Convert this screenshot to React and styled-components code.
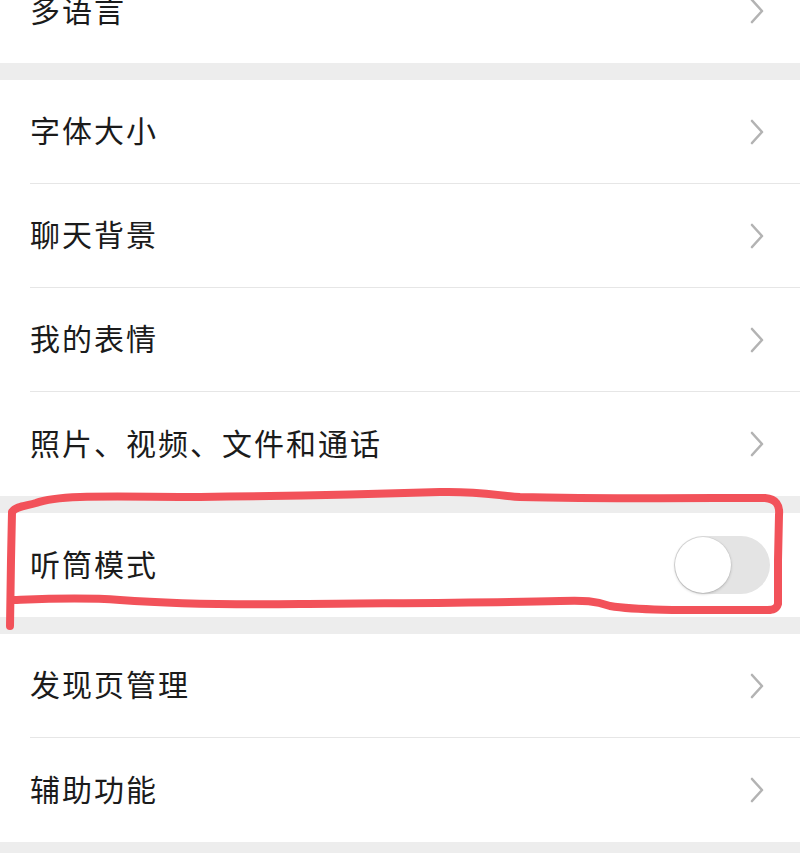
import styled, { createGlobalStyle } from "styled-components";

const GlobalStyle = createGlobalStyle`
  html, body {
    margin: 0;
    padding: 0;
    background: #ededed;
  }
  body {
    font-family: "Noto Sans CJK SC", "Noto Sans", sans-serif;
    overflow: hidden;
  }
`;

const Page = styled.div`
  position: relative;
  width: 800px;
  height: 853px;
  overflow: hidden;
  background: #ededed;
`;

const List = styled.div`
  display: flex;
  flex-direction: column;
  gap: 17px;
  margin-top: -41px;
`;

const Group = styled.div`
  background: #ffffff;
  display: flex;
  flex-direction: column;
`;

const Row = styled.div`
  display: flex;
  padding-left: 30px;
  &:last-child > div {
    border-bottom: none;
  }
`;

const Inner = styled.div`
  flex: 1;
  box-sizing: border-box;
  height: 104px;
  display: flex;
  align-items: center;
  justify-content: space-between;
  padding-right: ${(p) => (p.$toggle ? "30px" : "35px")};
  border-bottom: 1px solid #e6e6e6;
`;

const Label = styled.span`
  font-size: 30px;
  color: #1b1b1b;
  letter-spacing: 2px;
  margin-top: -5px;
`;

const Track = styled.div`
  width: 96px;
  height: 58px;
  border-radius: 29px;
  background: #e4e4e4;
  display: flex;
  align-items: center;
  padding-left: 1px;
  box-sizing: border-box;
`;

const Knob = styled.div`
  width: 56px;
  height: 56px;
  border-radius: 50%;
  background: #ffffff;
  box-shadow: 0 1px 3px rgba(0, 0, 0, 0.22), 0 0 0 0.5px rgba(0, 0, 0, 0.06);
`;

const Marker = styled.svg`
  position: absolute;
  left: 0;
  top: 0;
  pointer-events: none;
`;

const Chevron = () => (
  <svg width="16" height="26" viewBox="0 0 16 26">
    <path
      d="M3 2 L13 13 L3 24"
      fill="none"
      stroke="#b3b3b3"
      strokeWidth="2.6"
      strokeLinecap="round"
      strokeLinejoin="round"
    />
  </svg>
);

const Item = ({ label, toggle }) => (
  <Row>
    <Inner $toggle={toggle}>
      <Label>{label}</Label>
      {toggle ? (
        <Track>
          <Knob />
        </Track>
      ) : (
        <Chevron />
      )}
    </Inner>
  </Row>
);

const groups = [
  [{ label: "多语言" }],
  [
    { label: "字体大小" },
    { label: "聊天背景" },
    { label: "我的表情" },
    { label: "照片、视频、文件和通话" },
  ],
  [{ label: "听筒模式", toggle: true }],
  [{ label: "发现页管理" }, { label: "辅助功能" }],
];

export default function App() {
  return (
    <Page>
      <GlobalStyle />
      <List>
        {groups.map((g, i) => (
          <Group key={i}>
            {g.map((it) => (
              <Item key={it.label} {...it} />
            ))}
          </Group>
        ))}
      </List>
      <Marker width="800" height="853" viewBox="0 0 800 853">
        <path
          d="M10 626 L11 560 L12 512 C16 506 26 506 36 503 C60 494 120 497 200 497 C300 496 380 494 440 492 C480 491 500 496 520 497 C600 499 700 498 765 498 C776 499 780 505 779 515 L778 560 L778 604 C776 611 770 610 760 610 C700 610 640 611 610 606 C595 601 585 600 560 601 C480 603 400 603 300 604 C220 605 160 603 120 600 C80 597 40 599 14 600"
          fill="none"
          stroke="#f2525a"
          strokeWidth="8"
          strokeLinecap="round"
          strokeLinejoin="round"
        />
      </Marker>
    </Page>
  );
}
